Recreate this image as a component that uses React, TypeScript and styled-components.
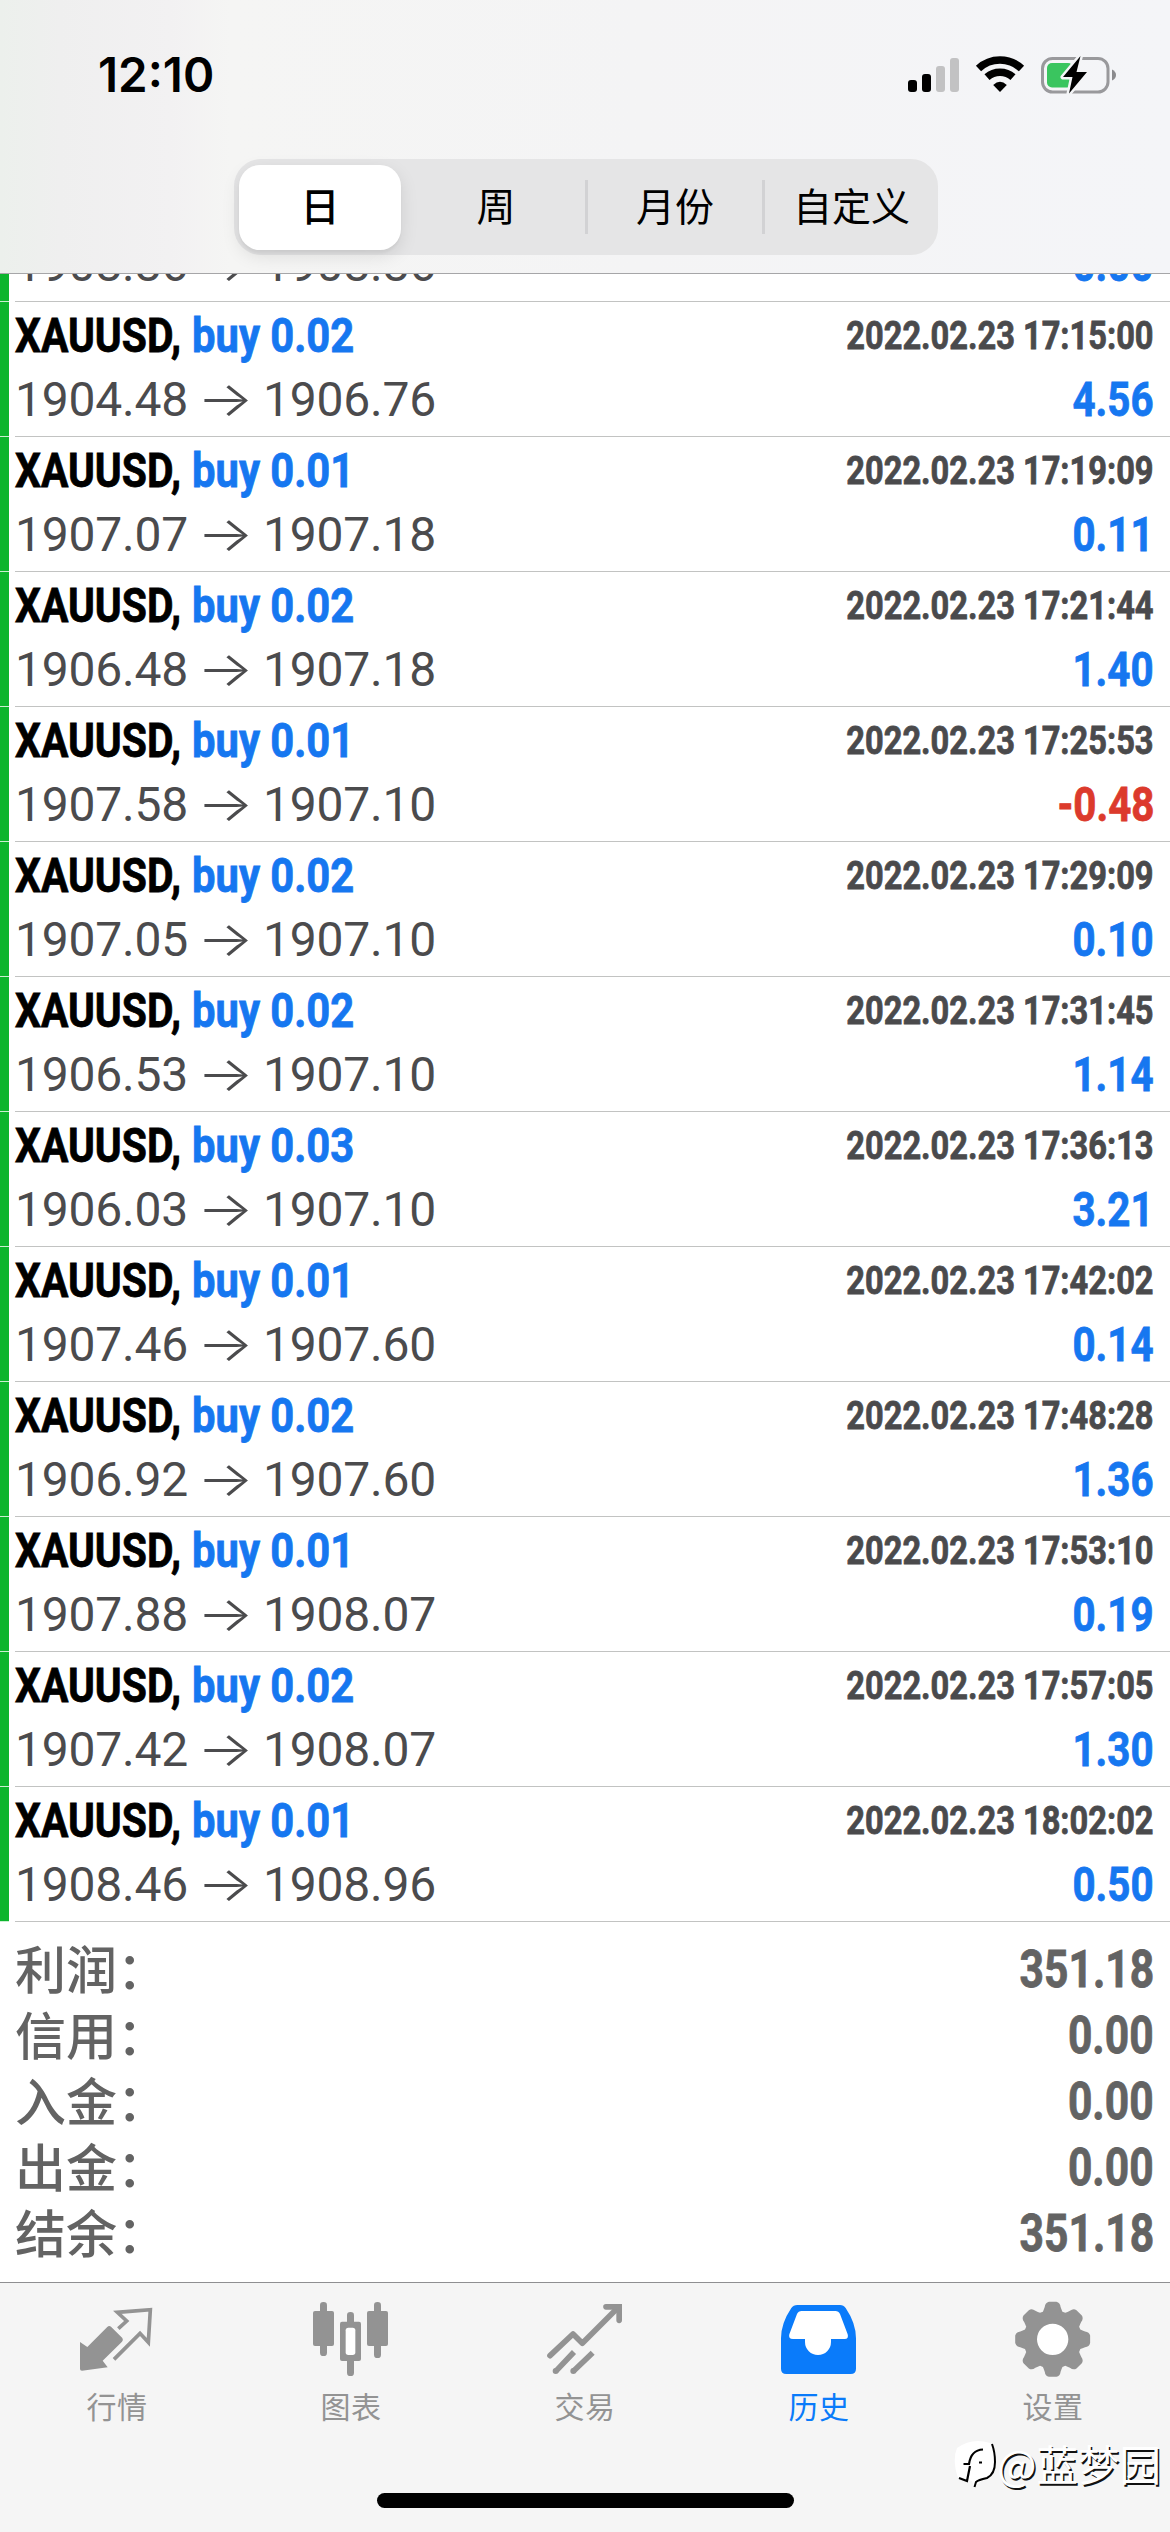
import React from "react";
import styled, { createGlobalStyle } from "styled-components";

const GlobalStyle = createGlobalStyle`
  * { box-sizing: border-box; }
  body { margin: 0; background: #fff; }
`;

const grotesque = `Roboto, "Liberation Sans", Arial, "Noto Sans CJK SC", sans-serif`;
const system = `Inter, "Noto Sans CJK SC", sans-serif`;
const chinese = `"Noto Sans CJK SC", sans-serif`;

const Screen = styled.div`
  width: 1170px;
  height: 2532px;
  display: flex;
  flex-direction: column;
  overflow: hidden;
  background: #fff;
  font-family: ${grotesque};
`;

const Header = styled.header`
  flex: none;
  height: 274px;
  border-bottom: 1px solid #a6a6a8;
  background: linear-gradient(90deg, #ecf0ec 0, #efefef 60px, #f2f1f2 170px, #f5f5f4 230px, #f4f4f5 640px, #f4f5f8 1170px);
`;

const StatusBar = styled.div`
  height: 159px;
  padding: 0 53px 10px 98px;
  display: flex;
  align-items: center;
  justify-content: space-between;
`;

const Clock = styled.span`
  font-family: ${system};
  font-size: 47.5px;
  font-weight: 600;
  line-height: 60px;
  color: #000;
`;

const StatusIcons = styled.div`
  display: flex;
  align-items: flex-start;
`;

const Segmented = styled.div`
  width: 704px;
  height: 96px;
  margin-left: 234px;
  display: grid;
  grid-template-columns: 173px 178px 177px 176px;
  align-items: center;
  border-radius: 27px;
  background: #e5e5e6;
`;

const Segment = styled.div<{ $divider?: boolean }>`
  height: 54px;
  padding-bottom: 5px;
  display: flex;
  align-items: center;
  justify-content: center;
  border-left: ${(p) => (p.$divider ? "3px solid #d2d2d4" : "0")};
  font-family: ${chinese};
  font-size: 39px;
  line-height: 49px;
  color: #000;
`;

const ActiveSegment = styled(Segment)`
  width: 162px;
  height: 85px;
  margin-left: 5px;
  border-radius: 21px;
  background: #fff;
  font-weight: 500;
  box-shadow: 0 6px 18px rgba(0, 0, 0, 0.1), 0 3px 3px rgba(0, 0, 0, 0.04);
`;

const History = styled.main`
  flex: none;
  height: 1648px;
  display: flex;
  flex-direction: column;
`;

const DealRow = styled.article<{ $height?: number }>`
  flex: none;
  height: ${(p) => p.$height ?? 135}px;
  display: grid;
  grid-template-columns: 9px 6px 1fr;
  grid-template-rows: 100%;
  overflow: hidden;
`;

const Marker = styled.div`
  background: #0cb52d;
  border-bottom: 1px solid #c9efd0;
`;

const DealBody = styled.div`
  grid-column: 3;
  padding: 0 16px 3px 0;
  display: flex;
  flex-direction: column;
  justify-content: flex-end;
  border-bottom: 1px solid #c2c3c2;
`;

const Line = styled.div<{ $height: number }>`
  flex: none;
  height: ${(p) => p.$height}px;
  display: flex;
  align-items: center;
  justify-content: space-between;
`;

const Group = styled.div`
  display: flex;
  align-items: center;
`;

const Narrow = styled.span<{ $size: number; $scale: number; $color: string; $right?: boolean; $box?: number }>`
  display: block;
  width: ${(p) => (p.$box ? `${p.$box}px` : "auto")};
  font-size: ${(p) => p.$size}px;
  font-weight: 700;
  line-height: 60px;
  white-space: pre;
  color: ${(p) => p.$color};
  -webkit-text-stroke: 0.8px ${(p) => p.$color};
  transform: scaleX(${(p) => p.$scale});
  transform-origin: ${(p) => (p.$right ? "right" : "left")} center;
`;

const Price = styled.span`
  width: 187px;
  font-size: 48px;
  font-weight: 400;
  line-height: 60px;
  letter-spacing: -0.2px;
  color: #4b4b4d;
`;

const Arrow = styled.span`
  width: 61px;
  font-family: Inter, sans-serif;
  font-size: 48px;
  font-weight: 300;
  line-height: 60px;
  color: #4b4b4d;
  transform: translate(-5px, -1px) scaleX(1.24);
  transform-origin: left center;
`;

const Summary = styled.section`
  flex: none;
  height: 360px;
  padding: 15px 16px 0 15px;
`;

const SummaryLabel = styled.span`
  padding-bottom: 5px;
  font-family: ${chinese};
  font-size: 51px;
  font-weight: 500;
  line-height: 61px;
  color: #636363;
`;

const TabBar = styled.nav`
  position: relative;
  flex: none;
  height: 250px;
  border-top: 1px solid #8f8f91;
  background: #f5f5f5;
  display: grid;
  grid-template-columns: repeat(5, 234px);
  grid-template-rows: 210px 15px;
`;

const Tab = styled.div<{ $active?: boolean }>`
  padding-top: 18px;
  display: flex;
  flex-direction: column;
  align-items: center;
  color: ${(p) => (p.$active ? "#0a7bfa" : "#939393")};
`;

const TabLabel = styled.span`
  margin-top: 6px;
  font-family: ${chinese};
  font-size: 30px;
  letter-spacing: 0.5px;
  line-height: 44px;
`;

const HomeIndicator = styled.div`
  grid-column: 1 / -1;
  justify-self: center;
  width: 417px;
  height: 15px;
  border-radius: 8px;
  background: #000;
`;

const Watermark = styled.div`
  position: absolute;
  right: 9px;
  top: 150px;
  display: flex;
  align-items: center;
  font-family: ${chinese};
  font-size: 41.5px;
  line-height: 60px;
  color: #fff;
  text-shadow: 1.5px 1.5px 0 #111;

  svg {
    margin: 6px -3px 0 0;
  }
`;

type Deal = { volume: string; time: string; open: string; close: string; profit: string };

const deals: Deal[] = [
  { volume: "0.02", time: "17:15:00", open: "1904.48", close: "1906.76", profit: "4.56" },
  { volume: "0.01", time: "17:19:09", open: "1907.07", close: "1907.18", profit: "0.11" },
  { volume: "0.02", time: "17:21:44", open: "1906.48", close: "1907.18", profit: "1.40" },
  { volume: "0.01", time: "17:25:53", open: "1907.58", close: "1907.10", profit: "-0.48" },
  { volume: "0.02", time: "17:29:09", open: "1907.05", close: "1907.10", profit: "0.10" },
  { volume: "0.02", time: "17:31:45", open: "1906.53", close: "1907.10", profit: "1.14" },
  { volume: "0.03", time: "17:36:13", open: "1906.03", close: "1907.10", profit: "3.21" },
  { volume: "0.01", time: "17:42:02", open: "1907.46", close: "1907.60", profit: "0.14" },
  { volume: "0.02", time: "17:48:28", open: "1906.92", close: "1907.60", profit: "1.36" },
  { volume: "0.01", time: "17:53:10", open: "1907.88", close: "1908.07", profit: "0.19" },
  { volume: "0.02", time: "17:57:05", open: "1907.42", close: "1908.07", profit: "1.30" },
  { volume: "0.01", time: "18:02:02", open: "1908.46", close: "1908.96", profit: "0.50" },
];

const totals = [
  ["利润：", "351.18"],
  ["信用：", "0.00"],
  ["入金：", "0.00"],
  ["出金：", "0.00"],
  ["结余：", "351.18"],
];

function PriceLine({ open, close, profit }: { open: string; close: string; profit: string }) {
  return (
    <Line $height={67}>
      <Group>
        <Price>{open}</Price>
        <Arrow>→</Arrow>
        <Price>{close}</Price>
      </Group>
      <Narrow $size={48} $scale={0.84} $right $color={profit.startsWith("-") ? "#dc3a2c" : "#1677f0"}>
        {profit}
      </Narrow>
    </Line>
  );
}

function DealItem({ deal }: { deal: Deal }) {
  return (
    <DealRow>
      <Marker />
      <DealBody>
        <Line $height={60}>
          <Group>
            <Narrow $size={48} $scale={0.85} $box={177} $color="#000">XAUUSD,</Narrow>
            <Narrow $size={48} $scale={0.87} $color="#1677f0">{`buy ${deal.volume}`}</Narrow>
          </Group>
          <Narrow $size={39} $scale={0.836} $right $color="#4a4a4c">{`2022.02.23 ${deal.time}`}</Narrow>
        </Line>
        <PriceLine open={deal.open} close={deal.close} profit={deal.profit} />
      </DealBody>
    </DealRow>
  );
}

const TabIcon = ({ x, children }: { x: number; children: React.ReactNode }) => (
  <svg width="76" height="76" viewBox={`${x} 93 228 228`} fill="currentColor">{children}</svg>
);

const gearPath = (() => {
  const cx = 908, cy = 208;
  const pts: string[] = [];
  for (let i = 0; i < 8; i++) {
    const a = (i * Math.PI) / 4 - Math.PI / 2;
    const p = (r: number, d: number) => `${(cx + r * Math.cos(a + d)).toFixed(1)} ${(cy + r * Math.sin(a + d)).toFixed(1)}`;
    pts.push(`${i ? "L" : "M"}${p(88, -0.34)} Q${p(93, -0.29)} ${p(100, -0.24)} Q${p(112, -0.2)} ${p(113, -0.1)} L${p(113, 0.1)} Q${p(112, 0.2)} ${p(100, 0.24)} Q${p(93, 0.29)} ${p(88, 0.34)}`);
  }
  return pts.join(" ") + "Z M861 208a47 47 0 1 0 94 0a47 47 0 1 0 -94 0Z";
})();

export default function App() {
  return (
    <>
      <GlobalStyle />
      <Screen>
        <Header>
          <StatusBar>
            <Clock>12:10</Clock>
            <StatusIcons>
              <svg width="210" height="40" viewBox="906 54 210 40">
                <rect x="907" y="79" width="9" height="12" rx="3" />
                <rect x="921" y="73" width="9" height="18" rx="3" />
                <rect x="935" y="65" width="9" height="26" rx="3" fill="#c2c2c3" />
                <rect x="949" y="57" width="9" height="34" rx="3" fill="#c2c2c3" />
                <path d="M977.5 67.5A31.5 31.5 0 0 1 1020.5 67.5M986 76.2A19.5 19.5 0 0 1 1012 76.2" fill="none" stroke="#000" strokeWidth="7.6" />
                <path d="M992.2 84Q999 77.5 1005.8 84L999 91Z" />
                <rect x="1041.5" y="57.5" width="65.500" height="33.500" rx="10" fill="none" stroke="#99999c" strokeWidth="3" />
                <rect x="1046" y="62" width="26" height="24.500" rx="5" fill="#3ac55f" />
                <path d="M1111 68.500q4 2 4 5.500t-4 5.500z" fill="#8b8b8e" />
                <path d="M1079.500 55L1062 76H1071.500L1068 92.500L1086 71H1075.500Z" fill="#000" stroke="#f4f5f7" strokeWidth="5" strokeLinejoin="round" paintOrder="stroke" />
              </svg>
            </StatusIcons>
          </StatusBar>
          <Segmented>
            <ActiveSegment>日</ActiveSegment>
            <Segment>周</Segment>
            <Segment $divider>月份</Segment>
            <Segment $divider>自定义</Segment>
          </Segmented>
        </Header>
        <History>
          <DealRow $height={28}>
            <Marker />
            <DealBody>
              <PriceLine open="1908.86" close="1908.86" profit="0.00" />
            </DealBody>
          </DealRow>
          {deals.map((d) => <DealItem key={d.time} deal={d} />)}
        </History>
        <Summary>
          {totals.map(([label, value]) => (
            <Line key={label} $height={66}>
              <SummaryLabel>{label}</SummaryLabel>
              <Narrow $size={51} $scale={0.835} $right $color="#636363">{value}</Narrow>
            </Line>
          ))}
        </Summary>
        <TabBar>
          <Tab>
            <TabIcon x={237}>
              <path d="M240 216L262 231L321 172Q327 165 333 170L367 204Q371 210 366 215L308 272L323 292L246 302Q240 302 240 297Z" />
              <path d="M355 176L380 153L352 127L451 119L445 217L420 190L342 268" fill="none" stroke="currentColor" strokeWidth="11" />
            </TabIcon>
            <TabLabel>行情</TabLabel>
          </Tab>
          <Tab>
            <TabIcon x={939}>
              <rect x="939" y="123" width="63" height="105" rx="6" />
              <rect x="960" y="96" width="21" height="162" rx="10" />
              <rect x="1101" y="123" width="63" height="105" rx="6" />
              <rect x="1122" y="96" width="21" height="168" rx="10" />
              <rect x="1020" y="155" width="63" height="118" rx="6" />
              <rect x="1041" y="126" width="21" height="192" rx="10" />
              <rect x="1037" y="173" width="29" height="82" rx="8" fill="#fff" />
            </TabIcon>
            <TabLabel>图表</TabLabel>
          </Tab>
          <Tab>
            <TabIcon x={441}>
              <g fill="none" stroke="currentColor" strokeWidth="17">
                <path d="M450 257L519 192L547 220L652 115" strokeLinejoin="round" strokeLinecap="round" />
                <path d="M618 110.500H657.500V151" strokeLinecap="round" />
                <path d="M467 304L522 246M520 304L578 248" />
              </g>
              <circle cx="467" cy="303" r="9" />
              <circle cx="520" cy="303" r="9" />
            </TabIcon>
            <TabLabel>交易</TabLabel>
          </Tab>
          <Tab $active>
            <TabIcon x={93}>
              <path d="M142 105H270Q281 105 287 114Q318 160 318 205V296Q318 312 302 312H109Q93 312 93 296V205Q93 160 124 114Q130 105 142 105Z" />
              <path d="M155 123H256Q266 123 270 132L293 193Q297 207 284 207H243V216A39 39 0 0 1 165 216V207H129Q114 207 118 193L141 132Q145 123 155 123Z" fill="#fff" />
            </TabIcon>
            <TabLabel>历史</TabLabel>
          </Tab>
          <Tab>
            <TabIcon x={795}>
              <circle cx="908" cy="208" r="60" fill="#fff" />
              <path d={gearPath} fillRule="evenodd" />
            </TabIcon>
            <TabLabel>设置</TabLabel>
          </Tab>
          <HomeIndicator />
          <Watermark>
            <svg width="46" height="52" viewBox="0 0 46 52">
              <path d="M3 8Q18 -3 36 3Q41 8 41 22Q41 36 30 39L20 47L18 41L4 38Q-2 20 3 8Z" fill="#fff" />
              <path d="M5 38L13 41L16 26M9.500 24H15Q17 10 29 9.500M25 22.500H28" fill="none" stroke="#000" strokeWidth="2.200" />
              <path d="M38 4Q41 12 41 22Q41 34 33 38Q24 40 22 42L20.500 47" fill="none" stroke="#000" strokeWidth="2" />
            </svg>
            <span>@蓝梦园</span>
          </Watermark>
        </TabBar>
      </Screen>
    </>
  );
}
